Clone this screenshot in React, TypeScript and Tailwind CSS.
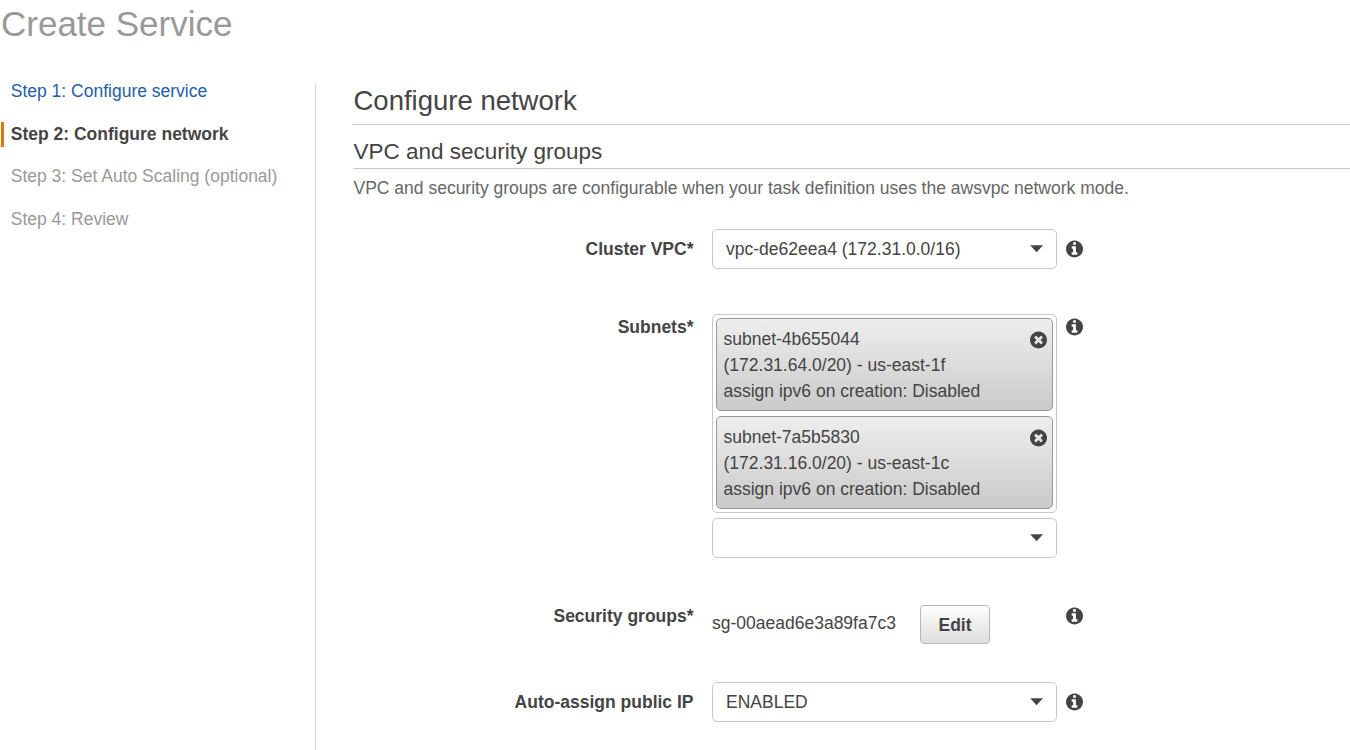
import type { ReactNode } from 'react';

const DISC =
  'm640-0q0 209-103 385.5t-279.5 279.5-385.5 103-385.5-103-279.5-279.5-103-385.5 103-385.5 279.5-279.5 385.5-103 385.5 103 279.5 279.5 103 385.5z';

const INFO_PATH =
  'M1152 1376v-160q0-14-9-23t-23-9h-96v-512q0-14-9-23t-23-9h-320q-14 0-23 9t-9 23v160q0 14 9 23t23 9h96v320h-96q-14 0-23 9t-9 23v160q0 14 9 23t23 9h448q14 0 23-9t9-23zm-128-896v-160q0-14-9-23t-23-9h-192q-14 0-23 9t-9 23v160q0 14 9 23t23 9h192q14 0 23-9t9-23zM1024 896' +
  DISC;

const TIMES_PATH =
  'M1277 1122q0-26-19-45l-181-181 181-181q19-19 19-45 0-27-19-46l-90-90q-19-19-46-19-26 0-45 19l-181 181-181-181q-19-19-45-19-27 0-46 19l-90 90q-19 19-19 46 0 26 19 45l181 181-181 181q-19 19-19 45 0 27 19 46l90 90q19 19 46 19 26 0 45-19l181-181 181 181q19 19 45 19 27 0 46-19l90-90q19-19 19-46zM1024 896' +
  DISC;

function Glyph({ path }: { path: string }) {
  return (
    <svg viewBox="128 100 1536 1592" className="block h-[18px] w-[17px] shrink-0" fill="#444444" aria-hidden="true">
      <path d={path} />
    </svg>
  );
}

function Select({ value }: { value?: string }) {
  return (
    <div className="flex h-10 w-[345px] items-center justify-between rounded-[5px] border border-[#c8c8c8] bg-white pr-[13px] pl-[13px]">
      <span>{value}</span>
      <svg width="13" height="8" viewBox="0 0 13 8" fill="#444444" className="block" aria-hidden="true">
        <path d="M0.2 0.2h12.8L6.6 7.2z" />
      </svg>
    </div>
  );
}

function SubnetTag({ id, zone }: { id: string; zone: string }) {
  return (
    <div className="flex h-[93px] items-start justify-between rounded-[5px] border border-[#979797] bg-linear-to-b from-[#eeeeee] to-[#cacaca] pt-[7px] pr-[5px] pl-[6.5px] leading-[26px]">
      <div>
        <div>{id}</div>
        <div>{zone}</div>
        <div>assign ipv6 on creation: Disabled</div>
      </div>
      <button type="button" className="mt-[5px]" aria-label="Remove">
        <Glyph path={TIMES_PATH} />
      </button>
    </div>
  );
}

function Field({ label, children, className }: { label: string; children: ReactNode; className: string }) {
  return (
    <div className={`flex items-start ${className}`}>
      <div className="mr-[18.5px] w-[340.5px] pt-[7px] text-right leading-[26px] font-bold">{label}</div>
      <div className="w-[345px]">{children}</div>
      <div className="ml-[9px] pt-[11px]">
        <Glyph path={INFO_PATH} />
      </div>
    </div>
  );
}

export default function App() {
  return (
    <div className="h-[750px] w-full overflow-hidden bg-white font-['Liberation_Sans',Arial,sans-serif] text-[17.5px] leading-[26px] text-[#444444]">
      <h1 className="h-[83px] pt-[3px] pl-px text-[35px] leading-[42px] text-[#999999]">Create Service</h1>
      <div className="flex h-[667px]">
        <nav className="flex w-[316px] shrink-0 flex-col gap-[17.5px] border-r border-[#dddddd] pl-px leading-[25px]">
          <a className="-mt-[4px] block pl-[9.75px] text-[#1e5dae]">Step 1: Configure service</a>
          <a className="block border-l-[3px] border-[#e07700] pl-[6.75px] font-bold">Step 2: Configure network</a>
          <a className="block pl-[9.75px] text-[#999999]">Step 3: Set Auto Scaling (optional)</a>
          <a className="block pl-[9.75px] text-[#999999]">Step 4: Review</a>
        </nav>
        <main className="min-w-0 flex-1 pl-[37px]">
          <h2 className="h-[42px] border-b border-[#c8c8c8] pl-[0.5px] text-[27.5px] leading-[35px]">
            Configure network
          </h2>
          <h3 className="h-11 border-b border-[#c8c8c8] pt-[12px] pl-[0.5px] text-[22.5px] leading-[30px]">
            VPC and security groups
          </h3>
          <p className="mt-[6px] pl-[0.5px] text-[#666666]">
            VPC and security groups are configurable when your task definition uses the awsvpc network mode.
          </p>
          <Field label="Cluster VPC*" className="mt-[28px]">
            <Select value="vpc-de62eea4 (172.31.0.0/16)" />
          </Field>
          <Field label="Subnets*" className="mt-[38px]">
            <div className="mt-[7px] mb-[5px] flex flex-col gap-[5px] rounded-[5px] border border-[#c8c8c8] p-[3px]">
              <SubnetTag id="subnet-4b655044" zone="(172.31.64.0/20) - us-east-1f" />
              <SubnetTag id="subnet-7a5b5830" zone="(172.31.16.0/20) - us-east-1c" />
            </div>
            <Select />
          </Field>
          <Field label="Security groups*" className="mt-[38px]">
            <div className="mt-[9px] flex items-center">
              <span className="-mt-[3px] w-[208px]">sg-00aead6e3a89fa7c3</span>
              <button
                type="button"
                className="h-[39px] w-[70px] rounded-[4px] border border-[#b8b8b8] bg-linear-to-b from-white to-[#dddddd] font-bold"
              >
                Edit
              </button>
            </div>
          </Field>
          <Field label="Auto-assign public IP" className="mt-[38px]">
            <Select value="ENABLED" />
          </Field>
        </main>
      </div>
    </div>
  );
}
